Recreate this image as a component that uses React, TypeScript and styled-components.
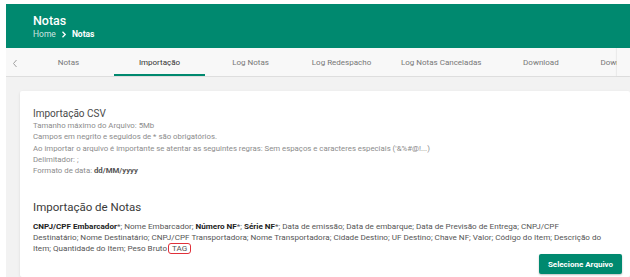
import styled, { createGlobalStyle } from 'styled-components';

const GlobalStyle = createGlobalStyle`
  html, body {
    margin: 0;
    padding: 0;
    background: #ffffff;
    font-family: Roboto, "Liberation Sans", Arial, sans-serif;
  }
  * {
    box-sizing: border-box;
  }
`;

const Page = styled.div`
  padding: 4px 0 0 6px;
  height: 277px;
  overflow: hidden;
`;

const Main = styled.div`
  background: #f2f2f2;
  height: 100%;
  display: flex;
  flex-direction: column;
`;

const Header = styled.header`
  background: #00896f;
  height: 44px;
  flex: none;
  padding: 9px 0 0 27px;
  color: #ffffff;
`;

const Title = styled.h1`
  margin: 0;
  font-size: 12.5px;
  font-weight: 500;
  line-height: 16px;
`;

const Crumbs = styled.div`
  display: flex;
  align-items: center;
  gap: 5px;
  font-size: 8.5px;
  line-height: 11px;
`;

const Crumb = styled.span<{ $current?: boolean }>`
  color: ${(p) => (p.$current ? '#ffffff' : 'rgba(255,255,255,0.8)')};
  font-weight: ${(p) => (p.$current ? 700 : 400)};
`;

const TabBar = styled.nav`
  display: flex;
  flex: none;
  height: 29px;
  background: #f8f8f8;
  border-bottom: 1px solid #dedede;
`;

const ScrollButton = styled.div`
  width: 17px;
  display: flex;
  align-items: center;
  justify-content: center;
  color: #9a9a9a;
  padding-top: 2px;
`;

const TabList = styled.div`
  flex: 1;
  display: flex;
  overflow: hidden;
`;

const Tab = styled.div<{ $active?: boolean }>`
  flex: none;
  min-width: 91px;
  padding: 3px 14px 0;
  display: flex;
  align-items: center;
  justify-content: center;
  font-size: 8px;
  white-space: nowrap;
  color: ${(p) => (p.$active ? '#333333' : '#777777')};
  border-bottom: 2px solid ${(p) => (p.$active ? '#00896f' : 'transparent')};
`;

const RightEdge = styled.div`
  width: 13px;
  background: #f8f8f8;
  box-shadow: -1px 0 1px rgba(0, 0, 0, 0.05);
`;

const Content = styled.div`
  flex: 1;
  padding: 14px 0 0 14px;
`;

const Card = styled.section`
  background: #ffffff;
  height: 100%;
  border-radius: 2px;
  box-shadow: 0 1px 3px rgba(0, 0, 0, 0.1);
  padding: 16px 8px 0 13px;
`;

const SectionTitle = styled.h2<{ $size: number; $color: string }>`
  margin: 0;
  font-weight: 400;
  font-size: ${(p) => p.$size}px;
  color: ${(p) => p.$color};
  line-height: 13px;
`;

const InfoList = styled.div`
  font-size: 7.8px;
  line-height: 11.3px;
  color: #8c8c8c;
  margin-bottom: 25px;
`;

const Strong = styled.b<{ $color?: string }>`
  font-weight: 700;
  color: ${(p) => p.$color || '#555555'};
`;

const Fields = styled.p`
  margin: 7px 0 0;
  padding-right: 16px;
  font-size: 8.1px;
  line-height: 10.8px;
  color: #555555;
`;

const Highlight = styled.span`
  display: inline-block;
  border: 1px solid #e0303a;
  border-radius: 3px;
  padding: 0 3px;
  line-height: 9px;
  margin-left: 1px;
`;

const Actions = styled.div`
  display: flex;
  justify-content: flex-end;
  margin-top: 0;
`;

const Button = styled.button`
  background: #00896f;
  color: #ffffff;
  border: none;
  border-radius: 2px;
  height: 20px;
  width: 83px;
  font-family: inherit;
  font-size: 8px;
  font-weight: 700;
  box-shadow: 0 1px 2px rgba(0, 0, 0, 0.25);
`;

const tabs = [
  'Notas',
  'Importação',
  'Log Notas',
  'Log Redespacho',
  'Log Notas Canceladas',
  'Download',
  'Download de Arquivos XML',
];

export default function App() {
  return (
    <Page>
      <GlobalStyle />
      <Main>
        <Header>
          <Title>Notas</Title>
          <Crumbs>
            <Crumb>Home</Crumb>
            <svg width="6" height="7" viewBox="0 0 6 7">
              <path d="M1.5 0.8 L4.2 3.5 L1.5 6.2" fill="none" stroke="#fff" strokeWidth="1.3" />
            </svg>
            <Crumb $current>Notas</Crumb>
          </Crumbs>
        </Header>

        <TabBar>
          <ScrollButton>
            <svg width="6" height="9" viewBox="0 0 6 9">
              <path d="M4.5 1 L1.5 4.5 L4.5 8" fill="none" stroke="#a0a0a0" strokeWidth="1" />
            </svg>
          </ScrollButton>
          <TabList>
            {tabs.map((t) => (
              <Tab key={t} $active={t === 'Importação'}>
                {t}
              </Tab>
            ))}
          </TabList>
          <RightEdge />
        </TabBar>

        <Content>
          <Card>
            <SectionTitle $size={10} $color="#4a4a4a">Importação CSV</SectionTitle>
            <InfoList>
              <div>Tamanho máximo do Arquivo: 5Mb</div>
              <div>Campos em negrito e seguidos de * são obrigatórios.</div>
              <div>
                Ao importar o arquivo é importante se atentar as seguintes regras: Sem espaços e
                caracteres especiais ('&amp;%#@!...)
              </div>
              <div>Delimitador: ;</div>
              <div>
                Formato de data: <Strong>dd/MM/yyyy</Strong>
              </div>
            </InfoList>

            <SectionTitle $size={11.5} $color="#3a3a3a">Importação de Notas</SectionTitle>
            <Fields>
              <Strong $color="#222">CNPJ/CPF Embarcador</Strong>*; Nome Embarcador;{' '}
              <Strong $color="#222">Número NF</Strong>*; <Strong $color="#222">Série NF</Strong>*;
              Data de emissão; Data de embarque; Data de Previsão de Entrega; CNPJ/CPF
              Destinatário; Nome Destinatário; CNPJ/CPF Transportadora; Nome Transportadora;
              Cidade Destino; UF Destino; Chave NF; Valor; Código do Item; Descrição do Item;
              Quantidade do Item; Peso Bruto<Highlight>TAG</Highlight>
            </Fields>
            <Actions>
              <Button>Selecione Arquivo</Button>
            </Actions>
          </Card>
        </Content>
      </Main>
    </Page>
  );
}
